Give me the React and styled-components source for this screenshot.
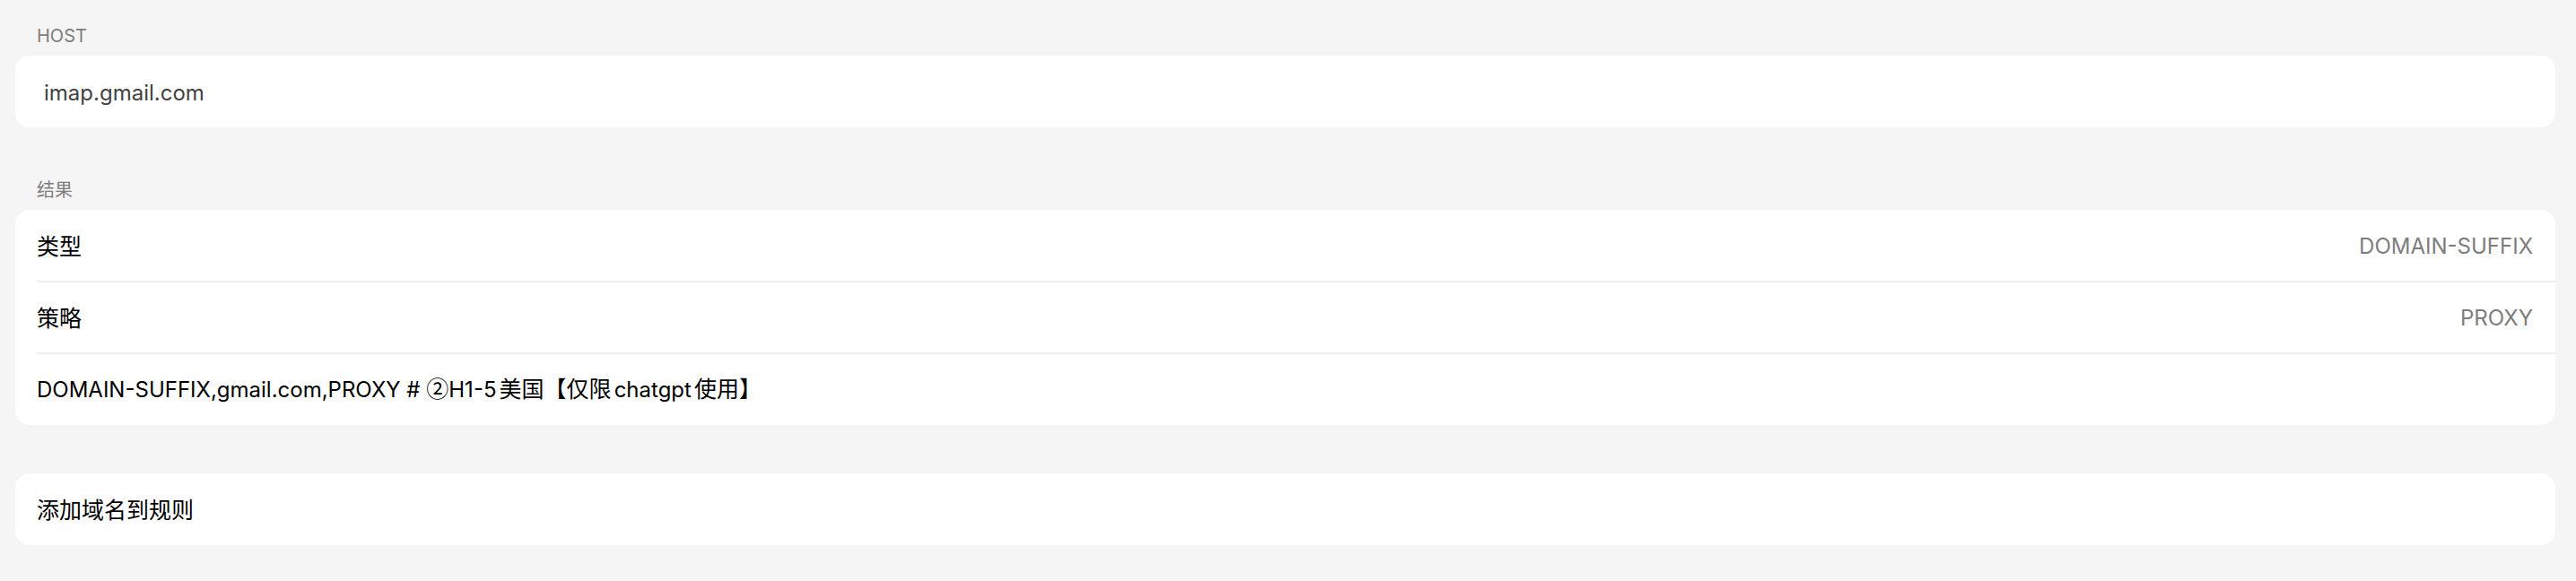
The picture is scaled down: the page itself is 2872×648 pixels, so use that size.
import React from "react";
import styled, { createGlobalStyle } from "styled-components";

const GlobalStyle = createGlobalStyle`
  * { box-sizing: border-box; }
  body {
    margin: 0;
    background: #f5f5f5;
    color: #000;
    font-family: Inter, "Noto Sans CJK SC", sans-serif;
    font-size: 24px;
    line-height: 32px;
  }
`;

const Page = styled.main`
  min-height: 100vh;
  padding: 26px 23px 40px 17px;
`;

const Section = styled.section`
  margin-bottom: ${({ $gap }) => $gap}px;
`;

const SectionTitle = styled.h2`
  margin: 0;
  padding: 0 24px 8px;
  color: #7d7d7d;
  font-size: 20px;
  font-weight: 400;
  line-height: 28px;
`;

const Card = styled.div`
  overflow: hidden;
  border-radius: 16px;
  background: #fff;
`;

const HostInput = styled.input`
  display: block;
  width: 100%;
  height: 80px;
  padding: 2px 32px 0;
  border: 0;
  outline: none;
  background: transparent;
  color: #424242;
  font: inherit;
`;

const ResultList = styled.dl`
  margin: 0;
  padding: 1px 0 1px 24px;
`;

const Row = styled.div`
  display: flex;
  align-items: center;
  justify-content: space-between;
  padding: 24px 25px 22px 0;

  & + & {
    border-top: 2px solid #efefef;
  }
`;

const Term = styled.dt`
  font-size: 25px;
  white-space: nowrap;
`;

const Value = styled.dd`
  margin: 0;
  color: #7d7d7d;
`;

const Rule = styled.dd`
  margin: 0;
  text-autospace: normal;
`;

const Han = styled.span`
  font-family: "Noto Sans CJK SC", sans-serif;
  font-size: 25px;
  line-height: 1;
`;

const ActionButton = styled.button`
  display: block;
  width: 100%;
  height: 80px;
  padding: 2px 24px 0;
  border: 0;
  background: transparent;
  color: inherit;
  font: inherit;
  font-size: 25px;
  text-align: left;
  cursor: pointer;
`;

const results = [
  { term: "类型", value: "DOMAIN-SUFFIX" },
  { term: "策略", value: "PROXY" },
];

export default function App() {
  return (
    <>
      <GlobalStyle />
      <Page>
        <Section $gap={56}>
          <SectionTitle>
            <label htmlFor="host">HOST</label>
          </SectionTitle>
          <Card>
            <HostInput id="host" type="text" defaultValue="imap.gmail.com" />
          </Card>
        </Section>
        <Section $gap={54}>
          <SectionTitle>结果</SectionTitle>
          <Card>
            <ResultList>
              {results.map(({ term, value }) => (
                <Row key={term}>
                  <Term>{term}</Term>
                  <Value>{value}</Value>
                </Row>
              ))}
              <Row>
                <Rule>
                  DOMAIN-SUFFIX,gmail.com,PROXY # <Han>②</Han>H1-5
                  <Han>美国【仅限</Han>chatgpt<Han>使用】</Han>
                </Rule>
              </Row>
            </ResultList>
          </Card>
        </Section>
        <Card>
          <ActionButton type="button">添加域名到规则</ActionButton>
        </Card>
      </Page>
    </>
  );
}
